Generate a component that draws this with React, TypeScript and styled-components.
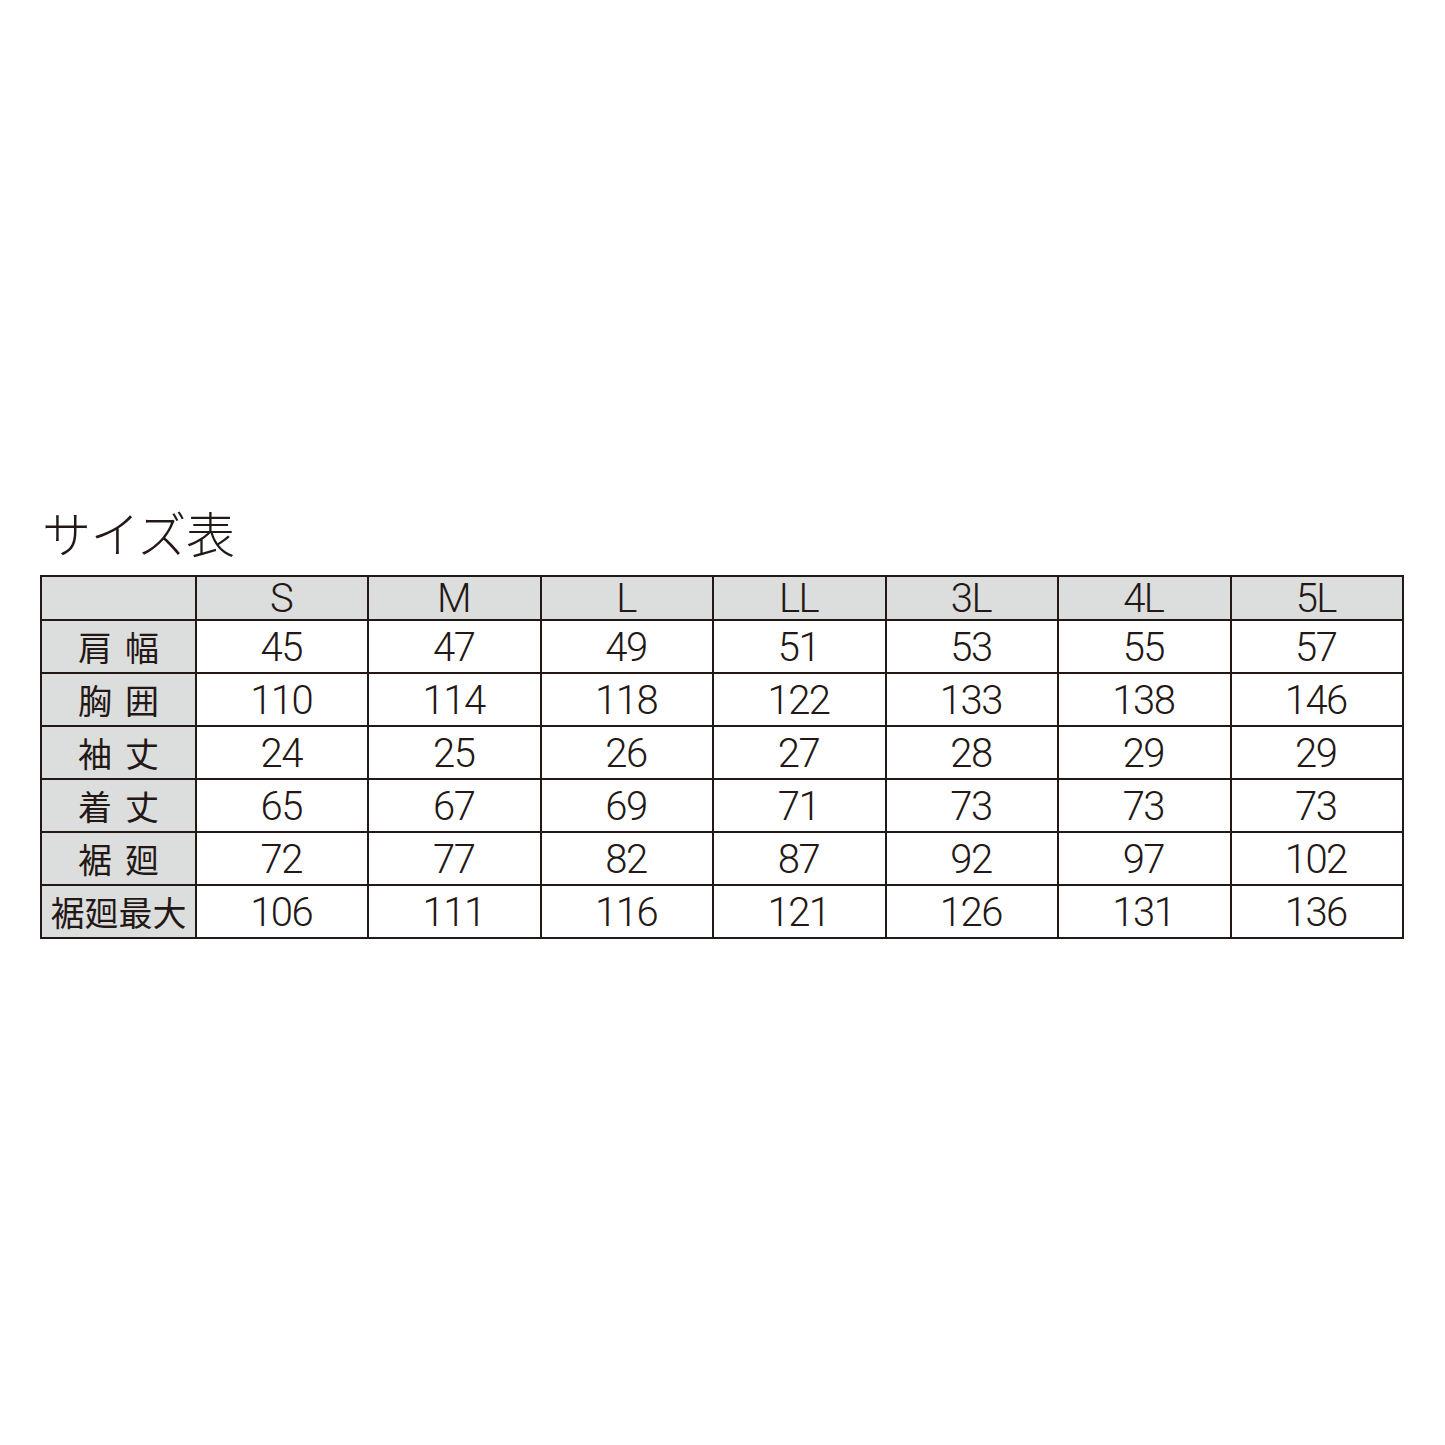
import React from "react";
import styled, { createGlobalStyle } from "styled-components";

const Global = createGlobalStyle`
  html, body { margin: 0; padding: 0; background: #ffffff; }
  body { width: 1445px; height: 1445px; overflow: hidden; }
`;

const Page = styled.div`
  width: 1445px;
  height: 1445px;
  box-sizing: border-box;
  padding: 501px 41px 0 40px;
  background: #fff;
  color: #231815;
`;

const Title = styled.h1`
  margin: 0 0 12px 2px;
  font-family: "Noto Sans CJK JP", "Noto Sans", sans-serif;
  font-weight: 300;
  font-size: 49px;
  line-height: 62px;
  letter-spacing: -0.5px;
  color: #231815;
`;

const Table = styled.table`
  width: 1364px;
  border-collapse: collapse;
  table-layout: fixed;
  border: 2px solid #231815;
`;

const Row = styled.tr<{ $h: number }>`
  height: ${(p) => p.$h}px;
`;

const Cell = styled.td<{ $gray?: boolean }>`
  border: 2px solid #231815;
  padding: 2px 2px 0 0;
  text-align: center;
  vertical-align: middle;
  background: ${(p) => (p.$gray ? "#dcdddd" : "#ffffff")};
  font-family: "Roboto", "Liberation Sans", sans-serif;
  font-size: 40px;
  font-weight: 300;
  letter-spacing: -1.5px;
  line-height: 1;
  color: #231815;
`;

const LabelCell = styled.td`
  border: 2px solid #231815;
  padding: 0;
  background: #dcdddd;
  vertical-align: middle;
  width: 153px;
`;

const LabelText = styled.div<{ $gap: number }>`
  display: flex;
  justify-content: center;
  align-items: center;
  gap: ${(p) => p.$gap}px;
  font-family: "Noto Sans CJK JP", "Noto Sans", sans-serif;
  font-weight: 400;
  font-size: 34px;
  line-height: 1;
  color: #231815;
  padding-top: 1px;
`;

const sizes = ["S", "M", "L", "LL", "3L", "4L", "5L"];
const rows: { label: string; values: number[] }[] = [
  { label: "肩幅", values: [45, 47, 49, 51, 53, 55, 57] },
  { label: "胸囲", values: [110, 114, 118, 122, 133, 138, 146] },
  { label: "袖丈", values: [24, 25, 26, 27, 28, 29, 29] },
  { label: "着丈", values: [65, 67, 69, 71, 73, 73, 73] },
  { label: "裾廻", values: [72, 77, 82, 87, 92, 97, 102] },
  { label: "裾廻最大", values: [106, 111, 116, 121, 126, 131, 136] },
];

export default function App() {
  return (
    <Page>
      <Global />
      <Title>サイズ表</Title>
      <Table>
        <tbody>
          <Row $h={43}>
            <LabelCell />
            {sizes.map((s) => (
              <Cell key={s} $gray>
                {s}
              </Cell>
            ))}
          </Row>
          {rows.map((r) => (
            <Row key={r.label} $h={53}>
              <LabelCell>
                <LabelText $gap={r.label.length > 2 ? 0 : 13}>
                  {Array.from(r.label).map((c, i) => (
                    <span key={i}>{c}</span>
                  ))}
                </LabelText>
              </LabelCell>
              {r.values.map((v, i) => (
                <Cell key={i}>{v}</Cell>
              ))}
            </Row>
          ))}
        </tbody>
      </Table>
    </Page>
  );
}
